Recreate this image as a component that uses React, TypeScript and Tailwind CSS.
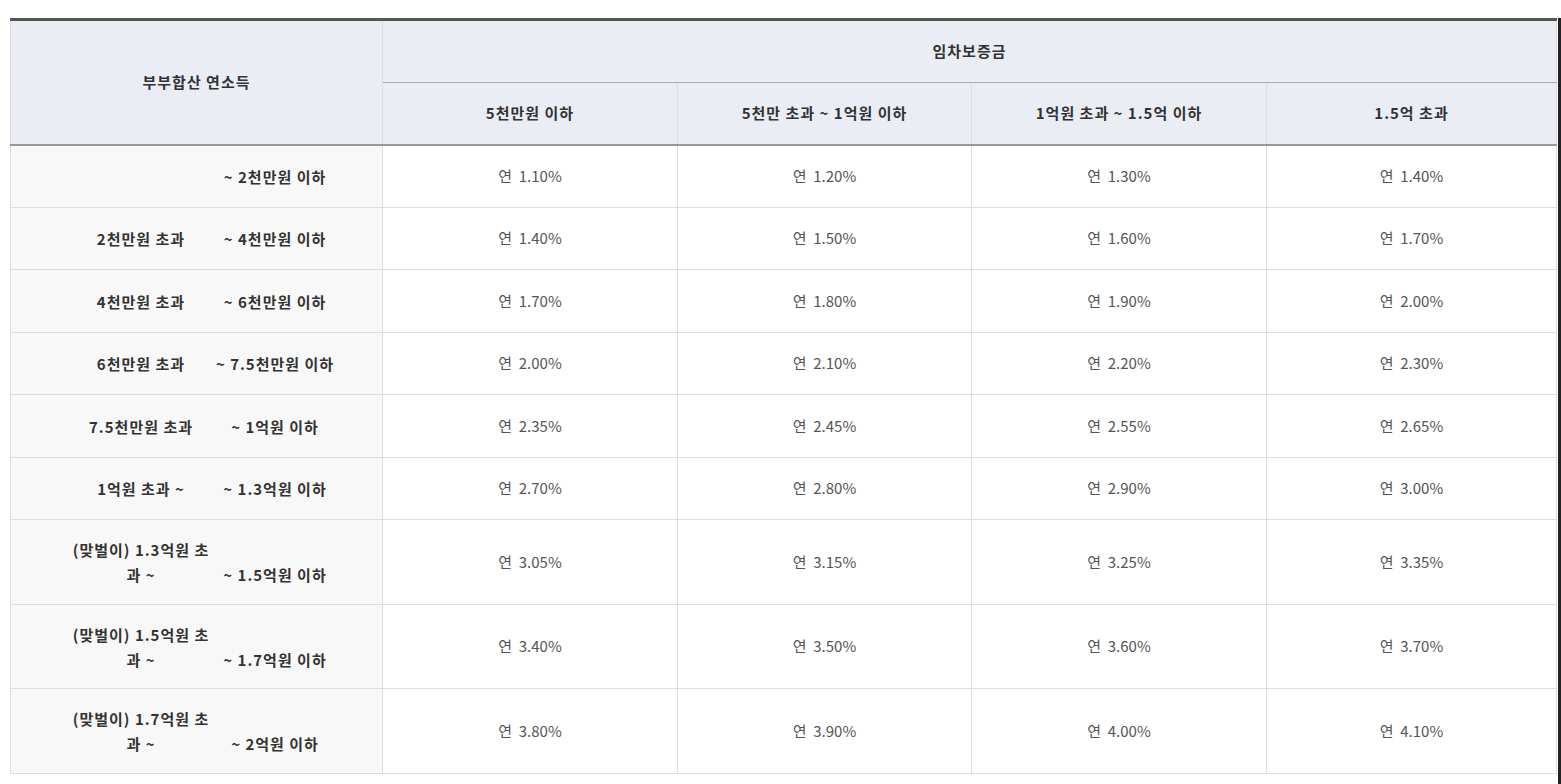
import React from "react";

const font = { fontFamily: '"Malgun Gothic", "Noto Sans CJK KR", "Noto Sans", sans-serif' };

type Row = { left: React.ReactNode; right: string; rates: string[]; h: string };

const rows: Row[] = [
  { left: "", right: "~ 2천만원 이하", rates: ["1.10", "1.20", "1.30", "1.40"], h: "h-[63px]" },
  { left: "2천만원 초과", right: "~ 4천만원 이하", rates: ["1.40", "1.50", "1.60", "1.70"], h: "h-[62px]" },
  { left: "4천만원 초과", right: "~ 6천만원 이하", rates: ["1.70", "1.80", "1.90", "2.00"], h: "h-[63px]" },
  { left: "6천만원 초과", right: "~ 7.5천만원 이하", rates: ["2.00", "2.10", "2.20", "2.30"], h: "h-[62px]" },
  { left: "7.5천만원 초과", right: "~ 1억원 이하", rates: ["2.35", "2.45", "2.55", "2.65"], h: "h-[63px]" },
  { left: "1억원 초과 ~", right: "~ 1.3억원 이하", rates: ["2.70", "2.80", "2.90", "3.00"], h: "h-[62px]" },
  {
    left: (
      <>
        (맞벌이) 1.3억원 초<br />과 ~
      </>
    ),
    right: "~ 1.5억원 이하",
    rates: ["3.05", "3.15", "3.25", "3.35"],
    h: "h-[85px]",
  },
  {
    left: (
      <>
        (맞벌이) 1.5억원 초<br />과 ~
      </>
    ),
    right: "~ 1.7억원 이하",
    rates: ["3.40", "3.50", "3.60", "3.70"],
    h: "h-[84px]",
  },
  {
    left: (
      <>
        (맞벌이) 1.7억원 초<br />과 ~
      </>
    ),
    right: "~ 2억원 이하",
    rates: ["3.80", "3.90", "4.00", "4.10"],
    h: "h-[85px]",
  },
];

export default function App() {
  return (
    <div className="w-[1561px] h-[784px] bg-white flex overflow-hidden" style={font}>
      <div className="flex-1 pl-[10px] pr-[1px] pt-[18px]">
        <table className="w-full table-fixed border-collapse border-t-[3px] border-t-[#555555] border-b border-b-[#aaaaaa]">
          <colgroup>
            <col className="w-[372px]" />
            <col className="w-[295px]" />
            <col className="w-[294px]" />
            <col className="w-[295px]" />
            <col />
          </colgroup>
          <thead>
            <tr className="h-[63px]">
              <th
                rowSpan={2}
                className="bg-[#eaeef4] border-l border-l-[#dddddd] border-r border-r-[#dddddd] border-b-2 border-b-[#999999] text-[15px] font-bold tracking-[1px] text-[#333333] text-center align-middle"
              >
                부부합산 연소득
              </th>
              <th
                colSpan={4}
                className="bg-[#eaeef4] border-b border-b-[#aaaaaa] border-r border-r-[#dddddd] text-[15px] font-bold tracking-[1px] text-[#333333] text-center align-middle"
              >
                임차보증금
              </th>
            </tr>
            <tr className="h-[62px]">
              {["5천만원 이하", "5천만 초과 ~ 1억원 이하", "1억원 초과 ~ 1.5억 이하", "1.5억 초과"].map((t) => (
                <th
                  key={t}
                  className="bg-[#eaeef4] border-r border-r-[#dddddd] border-b-2 border-b-[#999999] text-[15px] font-bold tracking-[1px] text-[#333333] text-center align-middle"
                >
                  {t}
                </th>
              ))}
            </tr>
          </thead>
          <tbody>
            {rows.map((r, i) => (
              <tr key={i} className={r.h}>
                <td className="bg-[#f8f8f8] border-l border-l-[#dddddd] border-r border-r-[#dddddd] border-b border-b-[#dddddd] align-middle p-0">
                  <div className="flex items-end pl-[60px] text-[15px] font-bold tracking-[1px] text-[#333333] leading-[25px]">
                    <div className="w-[140px] text-center whitespace-nowrap">{r.left}</div>
                    <div className="w-[128px] text-center whitespace-nowrap">{r.right}</div>
                  </div>
                </td>
                {r.rates.map((v, j) => (
                  <td
                    key={j}
                    className="border-r border-r-[#dddddd] border-b border-b-[#dddddd] text-center align-middle text-[15px] text-[#555555]"
                  >
                    연&nbsp; {v}%
                  </td>
                ))}
              </tr>
            ))}
          </tbody>
        </table>
      </div>
      <div className="w-[3px] bg-[#222222] mt-[18px]" />
    </div>
  );
}
